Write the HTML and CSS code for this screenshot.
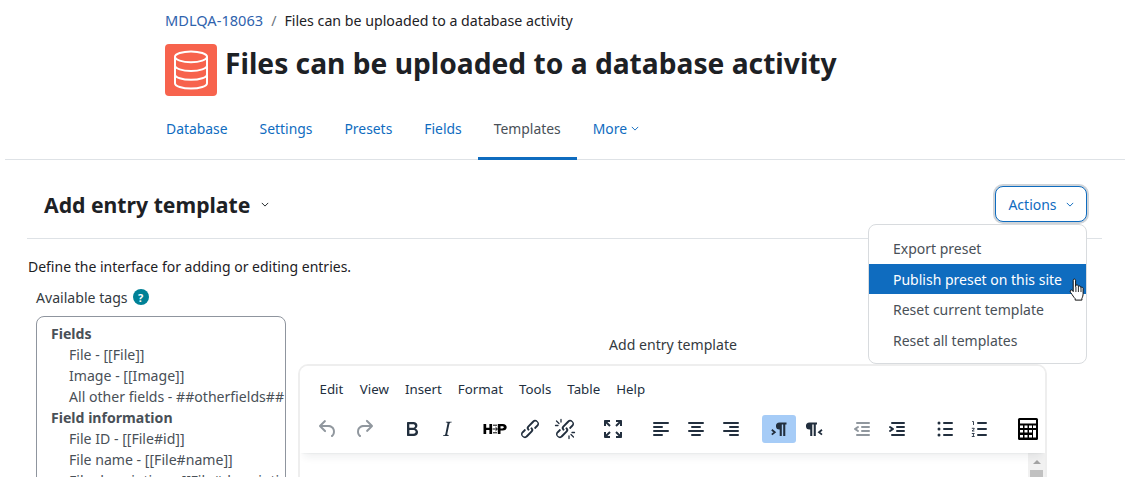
FILE: index.html
```html
<!DOCTYPE html>
<html lang="en">
<head>
<meta charset="utf-8">
<title>Add entry template</title>
<link rel="stylesheet" href="styles.css">
</head>
<body>
<div class="page">
  <header class="head">
    <nav class="crumbs"><a href="#">MDLQA-18063</a><span class="sep">/</span><span>Files can be uploaded to a database activity</span></nav>
    <div class="titlebar">
      <div class="modicon">
        <svg viewBox="0 0 24 24" width="48" height="48" fill="none" stroke="#fff" stroke-width="1"><ellipse cx="12" cy="5.4" rx="8" ry="2.7"/><path d="M4 5.4v13.2c0 1.500 3.600 2.700 8 2.700s8-1.200 8-2.700V5.400M4 9.800c0 1.500 3.600 2.700 8 2.700s8-1.200 8-2.700M4 14.200c0 1.500 3.600 2.700 8 2.700s8-1.200 8-2.700"/></svg>
      </div>
      <h1>Files can be uploaded to a database activity</h1>
    </div>
  </header>
  <div class="tabs">
    <a class="tab" href="#">Database</a>
    <a class="tab" href="#">Settings</a>
    <a class="tab" href="#">Presets</a>
    <a class="tab" href="#">Fields</a>
    <a class="tab active" href="#">Templates</a>
    <a class="tab" href="#">More<svg class="caret" viewBox="0 0 10 6" width="8" height="5"><path d="M1 1l4 4 4-4" fill="none" stroke="currentColor" stroke-width="1.2"/></svg></a>
  </div>
  <main class="main">
    <div class="tertiary">
      <h2>Add entry template<svg class="caret2" viewBox="0 0 10 6" width="8" height="5"><path d="M1 1l4 4 4-4" fill="none" stroke="#1d2125" stroke-width="1.2"/></svg></h2>
      <div class="actions">
        <button class="actbtn">Actions<svg viewBox="0 0 10 6" width="8" height="5"><path d="M1 1l4 4 4-4" fill="none" stroke="currentColor" stroke-width="1.2"/></svg></button>
        <div class="menu">
          <a href="#" class="item">Export preset</a>
          <a href="#" class="item hot">Publish preset on this site</a>
          <a href="#" class="item">Reset current template</a>
          <a href="#" class="item">Reset all templates</a>
          <svg class="hand" viewBox="0 0 17 24" width="17" height="24"><path d="M5.200 14.600V3.200c0-1.500 2.400-1.500 2.400 0v6.400l.3-1.100c.6-1 2.100-.8 2.300.3l.2.900c.3-1 2-1 2.300.2l.1.8c.5-.8 2.200-.7 2.300.7v5c0 2.200-.5 3.600-1.200 5v1.700H7.200v-1.400c-1.400-1.300-2.600-3.500-4.800-6.500-1-1.700 1-3 2.200-1.600l.6.9Z" fill="#fff" stroke="#111" stroke-width="1" stroke-linejoin="round"/><path d="M7.900 10v5M10.400 10v5M13 11v4" stroke="#111" stroke-width=".9" fill="none"/></svg>
        </div>
      </div>
    </div>
    <p class="desc">Define the interface for adding or editing entries.</p>
    <div class="workarea">
      <aside class="tags">
        <div class="tagslabel">Available tags <span class="help">?</span></div>
        <div class="tagsbox">
          <div class="tt">Fields</div>
          <div class="tg">File - [[File]]</div>
          <div class="tg">Image - [[Image]]</div>
          <div class="tg">All other fields - ##otherfields##</div>
          <div class="tt">Field information</div>
          <div class="tg">File ID - [[File#id]]</div>
          <div class="tg">File name - [[File#name]]</div>
          <div class="tg">File description - [[File#description]]</div>
        </div>
      </aside>
      <section class="editwrap">
        <div class="editlabel">Add entry template</div>
        <div class="editor">
          <div class="edhead">
            <div class="menubar"><span>Edit</span><span>View</span><span>Insert</span><span>Format</span><span>Tools</span><span>Table</span><span>Help</span></div>
            <div class="toolbar">
              <div class="grp first">
                <span class="tb dim"><svg viewBox="0 0 24 24"><path d="M6.400 8H12c3.700 0 6.200 2 6.800 5.100.6 2.700-.4 5.600-2.300 6.800a1 1 0 0 1-1-1.800c1.100-.6 1.800-2.700 1.400-4.600-.5-2.100-2.100-3.500-4.900-3.500H6.400l3.300 3.300a1 1 0 1 1-1.400 1.400l-5-5a1 1 0 0 1 0-1.400l5-5a1 1 0 0 1 1.400 1.400L6.400 8Z"/></svg></span>
                <span class="tb dim"><svg viewBox="0 0 24 24"><path d="M17.600 10H12c-2.800 0-4.400 1.400-4.900 3.500-.4 2 .3 4 1.400 4.600a1 1 0 1 1-1 1.800c-2-1.200-2.900-4.100-2.300-6.800.6-3 3-5.100 6.800-5.100h5.600l-3.300-3.300a1 1 0 1 1 1.400-1.400l5 5a1 1 0 0 1 0 1.400l-5 5a1 1 0 0 1-1.400-1.400l3.300-3.300Z"/></svg></span>
              </div>
              <div class="grp">
                <span class="tb"><svg viewBox="0 0 24 24"><path d="M7.800 19c-.3 0-.5 0-.6-.2l-.2-.5V5.700c0-.2 0-.4.2-.5l.6-.2h5c1.500 0 2.700.3 3.500 1 .7.6 1.100 1.400 1.100 2.500a3 3 0 0 1-.6 1.900c-.4.6-1 1-1.600 1.200.4.100.9.3 1.300.6s.8.7 1 1.200c.4.400.5 1 .5 1.600 0 1.300-.4 2.300-1.300 3-.8.7-2.100 1-3.800 1H7.800Zm5-8.300c.6 0 1.200-.1 1.600-.5.4-.3.6-.7.6-1.300 0-1.100-.8-1.700-2.300-1.700H9.300v3.500h3.400Zm.5 6c.7 0 1.300-.1 1.700-.4.4-.4.6-.9.6-1.500s-.2-1-.7-1.400c-.4-.3-1-.4-2-.4H9.400v3.800h4Z"/></svg></span>
                <span class="tb"><svg viewBox="0 0 24 24"><path d="M16.700 4.700l-.1.900h-.3c-.6 0-1 0-1.400.3-.3.3-.4.6-.5 1.100l-2.100 9.800v.6c0 .5.4.8 1.400.8h.2l-.2.8H8l.2-.8h.2c1.100 0 1.800-.5 2-1.500l2-9.800.1-.5c0-.6-.4-.8-1.400-.8h-.3l.2-.9h5.700Z"/></svg></span>
              </div>
              <div class="grp">
                <span class="tb"><svg class="h5p" viewBox="0 0 24 24"><path d="M.500 7h2.700v3.800h3.200V7h2.700v10H6.400v-4H3.200v4H.500Z" fill="#000"/><path d="M9.500 12h4.500M12.500 10.200l2 1.800-2 1.800M10 8.200h4M10 15.800h4" fill="none" stroke="#000" stroke-width="1"/><path d="M14.800 7h5c2.500 0 3.900 1.300 3.900 3.200 0 2-1.500 3.300-4 3.300h-2.200V17h-2.700Zm2.700 2.200v2.200h1.700c1 0 1.600-.4 1.600-1.100s-.6-1.100-1.600-1.100Z" fill="#000"/></svg></span>
                <span class="tb"><svg viewBox="0 0 24 24"><path d="M6.200 12.300a1 1 0 0 1 1.400 1.400l-2 2a2 2 0 1 0 2.600 2.800l4.800-4.800a1 1 0 0 0 0-1.400 1 1 0 1 1 1.400-1.300 2.900 2.900 0 0 1 0 4L9.600 20a3.900 3.900 0 0 1-5.500-5.500l2-2Zm11.600-.6a1 1 0 0 1-1.400-1.400l2-2a2 2 0 1 0-2.600-2.800L11 10.300a1 1 0 0 0 0 1.400A1 1 0 1 1 9.600 13a2.900 2.900 0 0 1 0-4L14.400 4a3.900 3.900 0 0 1 5.500 5.500l-2 2Z"/></svg></span>
                <span class="tb"><svg viewBox="0 0 24 24"><path d="M6.200 12.300a1 1 0 0 1 1.400 1.400l-2 2a2 2 0 1 0 2.600 2.800l4.800-4.800a1 1 0 0 0 0-1.400 1 1 0 1 1 1.400-1.300 2.900 2.900 0 0 1 0 4L9.600 20a3.900 3.900 0 0 1-5.500-5.500l2-2Zm11.600-.6a1 1 0 0 1-1.400-1.400l2-2a2 2 0 1 0-2.600-2.800L11 10.300a1 1 0 0 0 0 1.400A1 1 0 1 1 9.600 13a2.900 2.900 0 0 1 0-4L14.400 4a3.900 3.900 0 0 1 5.500 5.500l-2 2Z"/><path d="M3.500 4l2.500 2.500M8 2.500V5M2.500 8.500H5M20.500 20L18 17.500M16 21.500V19M21.500 15.500H19" fill="none" stroke="#222f3e" stroke-width="1.300" stroke-linecap="round"/></svg></span>
              </div>
              <div class="grp">
                <span class="tb"><svg viewBox="0 0 24 24"><path d="M4 3h5v2H6.400l3.300 3.300-1.400 1.400L5 6.400V9H3V4c0-.6.400-1 1-1Zm11 0h5c.6 0 1 .4 1 1v5h-2V6.400l-3.300 3.300-1.400-1.400L17.600 5H15V3ZM8.300 14.300l1.400 1.400L6.400 19H9v2H4a1 1 0 0 1-1-1v-5h2v2.600l3.300-3.300Zm7.400 0l3.300 3.300V15h2v5c0 .6-.4 1-1 1h-5v-2h2.600l-3.300-3.300 1.400-1.400Z"/></svg></span>
              </div>
              <div class="grp">
                <span class="tb"><svg viewBox="0 0 24 24"><path d="M5 5h14a1 1 0 0 1 0 2H5a1 1 0 1 1 0-2Zm0 4h8a1 1 0 0 1 0 2H5a1 1 0 1 1 0-2Zm0 8h8a1 1 0 0 1 0 2H5a1 1 0 0 1 0-2Zm0-4h14a1 1 0 0 1 0 2H5a1 1 0 0 1 0-2Z"/></svg></span>
                <span class="tb"><svg viewBox="0 0 24 24"><path d="M5 5h14a1 1 0 0 1 0 2H5a1 1 0 1 1 0-2Zm3 4h8a1 1 0 0 1 0 2H8a1 1 0 1 1 0-2Zm0 8h8a1 1 0 0 1 0 2H8a1 1 0 0 1 0-2Zm-3-4h14a1 1 0 0 1 0 2H5a1 1 0 0 1 0-2Z"/></svg></span>
                <span class="tb"><svg viewBox="0 0 24 24"><path d="M5 5h14a1 1 0 0 1 0 2H5a1 1 0 1 1 0-2Zm6 4h8a1 1 0 0 1 0 2h-8a1 1 0 0 1 0-2Zm0 8h8a1 1 0 0 1 0 2h-8a1 1 0 0 1 0-2Zm-6-4h14a1 1 0 0 1 0 2H5a1 1 0 0 1 0-2Z"/></svg></span>
              </div>
              <div class="grp">
                <span class="tb on"><svg viewBox="0 0 24 24"><path d="M12.500 5.500H19.500v2h-1.200V19h-2.100V7.500h-1.400V19h-2.100v-6.400h-.2a3.550 3.550 0 0 1 0-7.100Z"/><path d="M4.800 12.800l3 2.400-3 2.400" fill="none" stroke="#222f3e" stroke-width="1.800"/></svg></span>
                <span class="tb"><svg viewBox="0 0 24 24"><path d="M7.500 5.500H15v2h-1.200V19h-2.100V7.500h-1.400V19H8.200v-6.400h-.7a3.550 3.550 0 0 1 0-7.100Z"/><path d="M20 12.800l-3 2.400 3 2.400" fill="none" stroke="#222f3e" stroke-width="1.800"/></svg></span>
              </div>
              <div class="grp">
                <span class="tb dim"><svg viewBox="0 0 24 24"><path d="M7 5h12a1 1 0 0 1 0 2H7a1 1 0 1 1 0-2Zm5 4h7a1 1 0 0 1 0 2h-7a1 1 0 0 1 0-2Zm0 4h7a1 1 0 0 1 0 2h-7a1 1 0 0 1 0-2Zm-5 4h12a1 1 0 0 1 0 2H7a1 1 0 0 1 0-2Zm1.600-3.800a1 1 0 0 1-1.200 1.600l-3-2a1 1 0 0 1 0-1.600l3-2a1 1 0 0 1 1.200 1.600L6.800 12l1.800 1.200Z"/></svg></span>
                <span class="tb"><svg viewBox="0 0 24 24"><path d="M7 5h12a1 1 0 0 1 0 2H7a1 1 0 1 1 0-2Zm5 4h7a1 1 0 0 1 0 2h-7a1 1 0 0 1 0-2Zm0 4h7a1 1 0 0 1 0 2h-7a1 1 0 0 1 0-2Zm-5 4h12a1 1 0 0 1 0 2H7a1 1 0 0 1 0-2Zm-2.600-3.800L6.200 12l-1.800-1.200a1 1 0 0 1 1.200-1.600l3 2a1 1 0 0 1 0 1.600l-3 2a1 1 0 1 1-1.200-1.600Z"/></svg></span>
              </div>
              <div class="grp">
                <span class="tb"><svg viewBox="0 0 24 24"><path d="M11 5h8a1 1 0 0 1 0 2h-8a1 1 0 0 1 0-2Zm0 6h8a1 1 0 0 1 0 2h-8a1 1 0 0 1 0-2Zm0 6h8a1 1 0 0 1 0 2h-8a1 1 0 0 1 0-2Z"/><circle cx="6" cy="6" r="1.500"/><circle cx="6" cy="12" r="1.500"/><circle cx="6" cy="18" r="1.500"/></svg></span>
                <span class="tb"><svg viewBox="0 0 24 24"><path d="M10 17h8a1 1 0 0 1 0 2h-8a1 1 0 0 1 0-2Zm0-6h8a1 1 0 0 1 0 2h-8a1 1 0 0 1 0-2Zm0-6h8a1 1 0 0 1 0 2h-8a1 1 0 1 1 0-2Z"/><path d="M4.200 4.500H5.500V8M3.800 11.300h2.400v.9L4 14h2.400M3.800 16.500h2.500L5 18l1.300 1.500H3.800" fill="none" stroke="#222f3e" stroke-width=".9"/></svg></span>
              </div>
              <div class="grp">
                <span class="tb"><svg class="calc" viewBox="0 0 22 24"><rect x="1" y="1" width="20" height="22" rx="1.500" fill="#000"/><rect x="3" y="3" width="16" height="3.500" fill="#fff"/><g fill="#fff"><rect x="3" y="8.500" width="3" height="2.500"/><rect x="7.500" y="8.500" width="3" height="2.500"/><rect x="12" y="8.500" width="3" height="2.500"/><rect x="16" y="8.500" width="3" height="2.500"/><rect x="3" y="13" width="3" height="2.500"/><rect x="7.500" y="13" width="3" height="2.500"/><rect x="12" y="13" width="3" height="2.500"/><rect x="16" y="13" width="3" height="7.500"/><rect x="3" y="18" width="3" height="2.500"/><rect x="7.500" y="18" width="3" height="2.500"/><rect x="12" y="18" width="3" height="2.500"/></g></svg></span>
              </div>
            </div>
          </div>
          <div class="edbody">
            <div class="scroll"><span class="up"></span><span class="thumb"></span></div>
          </div>
        </div>
      </section>
    </div>
  </main>
</div>
</body>
</html>
```
FILE: styles.css
```css
* { box-sizing: border-box; }
html, body { margin: 0; height: 477px; overflow: hidden; background: #fff; }
body {
  font-family: "Noto Sans", "Open Sans", sans-serif;
  font-size: 14px;
  color: #1d2125;
}
a { text-decoration: none; color: #0f6cbf; }
.page { width: 1128px; height: 477px; overflow: hidden; padding: 0 3px 0 5px; }
.head { padding: 10px 0 0 160px; }
.crumbs { display: flex; height: 20px; align-items: center; gap: 8px; font-size: 14.2px; }
.crumbs a { color: #2f63ad; font-size: 14.6px; }
.sep { color: #6a737b; }
.titlebar { display: flex; align-items: flex-start; gap: 8px; margin-top: 14px; }
.modicon {
  width: 52px; height: 52px; border-radius: 4px; background: #f7634d;
  display: flex; align-items: center; justify-content: center;
}
h1 { margin: 0; font-size: 28.2px; font-weight: 700; line-height: 38px; }
.tabs {
  display: flex; height: 64px; padding: 0 0 0 145px;
  border-bottom: 1px solid #dee2e6; font-size: 13.9px;
}
.tab {
  display: flex; align-items: center; gap: 4px; padding: 4px 16px 0;
  height: 64px; border-bottom: 3px solid transparent;
}
.tab.active { color: #495057; border-bottom-color: #0f6cbf; }
.main { padding: 0 23px 0 22px; }
.tertiary {
  display: flex; justify-content: space-between; align-items: center;
  height: 79px; padding: 10px 15px 0 17px; border-bottom: 1px solid #dee2e6;
}
h2 { margin: 0; font-size: 21.2px; font-weight: 700; display: flex; align-items: center; gap: 11px; }
.actions { position: relative; }
.actbtn {
  display: flex; align-items: center; justify-content: center; gap: 9px;
  width: 92px; height: 36px; padding: 0; border-radius: 8px;
  font: inherit; color: #0f6cbf; background: #fff;
  border: 1px solid #0f6cbf; box-shadow: 0 0 0 2px #cfd4d9;
}
.menu {
  position: absolute; right: 0; top: 38px; width: 219px; height: 140px;
  padding: 8.3px 0; background: #fff; border: 1px solid #d8dbde; border-radius: 8px;
  z-index: 5;
}
.item { display: flex; align-items: center; height: 30.6px; padding: 0 24px; color: #495057; }
.item.hot { background: #0f6cbf; color: #fff; }
.hand { position: absolute; left: 199px; top: 52px; }
.desc { margin: 0; padding: 18px 0 0 1px; line-height: 20px; }
.workarea { display: flex; gap: 13px; padding: 10px 0 0 9px; font-size: 14.1px; }
.tags { width: 250px; flex: none; }
.tagslabel { height: 20px; display: flex; align-items: center; gap: 5px; color: #343a40; }
.help {
  width: 16px; height: 16px; border-radius: 50%; background: #008196; color: #fff;
  font-size: 11px; font-weight: 700; display: flex; align-items: center; justify-content: center;
}
.tagsbox {
  margin-top: 9px; height: 260px; border: 1px solid #8f959e; border-radius: 8px;
  padding: 6px 0 0 14px; overflow: hidden; white-space: nowrap; color: #495057; line-height: 21px;
}
.tt { font-weight: 700; }
.tg { padding-left: 18px; }
.editwrap { width: 748px; padding-top: 48px; }
.editlabel { text-align: center; height: 20px; color: #343a40; }
.editor {
  margin-top: 9px; height: 300px; border: 2px solid #eee; border-radius: 10px;
  overflow: hidden; background: #fff; position: relative; margin-left: -1px; width: 749px;
}
.edhead { height: 87px; box-shadow: 0 2px 2px -2px rgba(34,47,62,.1), 0 8px 8px -4px rgba(34,47,62,.07); position: relative; z-index: 1; background: #fff; }
.menubar { display: flex; padding: 13px 0 0 11.5px; height: 49px; color: #222f3e; align-items: flex-start; font-size: 13.3px; }
.menubar span { padding: 0 8px; line-height: 20px; margin-right: 0; }
.menubar span:first-child { padding: 0 8.5px 0 8px; }
.toolbar { display: flex; gap: 14px; padding-left: 11px; }
.grp { display: flex; gap: 1px; }
.grp.first { gap: 2px; }
.tb { width: 34px; height: 28px; display: flex; align-items: center; justify-content: center; border-radius: 3px; fill: #222f3e; }
.tb svg { width: 24px; height: 24px; flex: none; }
.tb.dim svg { fill: rgba(34,47,62,.5); }
.tb.on { background: #a6ccf7; }
.tb svg.calc { width: 22px; height: 24px; }
.tb svg.h5p { width: 26px; height: 24px; }
.edbody { height: 210px; position: relative; }
.scroll { position: absolute; right: 0; top: 0; width: 17px; height: 100%; background: #f1f1f1; display: flex; flex-direction: column; align-items: center; }
.up { margin-top: 7px; border: 4px solid transparent; border-bottom: 4px solid #a3a3a3; border-top: 0; width: 0; height: 0; }
.thumb { margin-top: 6px; width: 13px; height: 60px; background: #c1c1c1; }
```
